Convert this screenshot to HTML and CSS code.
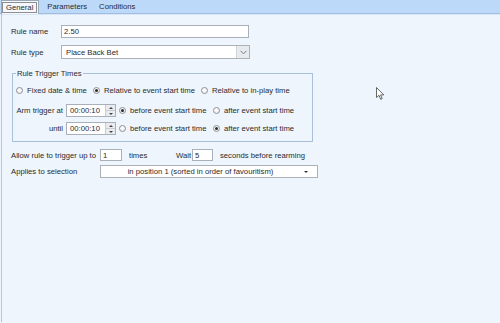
FILE: index.html
```html
<!DOCTYPE html>
<html>
<head>
<meta charset="utf-8">
<link rel="stylesheet" href="styles.css">
</head>
<body>
<div class="tabs">
  <div class="tab active"><span class="focus">General</span></div>
  <div class="tab">Parameters</div>
  <div class="tab">Conditions</div>
</div>
<div class="page">
  <div class="row r-name">
    <span class="lbl">Rule name</span>
    <div class="textbox wide">2.50</div>
  </div>
  <div class="row r-type">
    <span class="lbl">Rule type</span>
    <div class="combo wide">
      <span class="combo-text">Place Back Bet</span>
      <span class="combo-btn"><svg width="7" height="5" viewBox="0 0 7 5"><path d="M0.5 0.8 L3.5 3.8 L6.5 0.8" fill="none" stroke="#7a7a7a" stroke-width="1"/></svg></span>
    </div>
  </div>
  <div class="group">
    <span class="legend">Rule Trigger Times</span>
    <div class="grow g1">
      <span class="opt w77"><span class="radio"></span>Fixed date &amp; time</span>
      <span class="opt w108"><span class="radio on"></span>Relative to event start time</span>
      <span class="opt"><span class="radio"></span>Relative to in-play time</span>
    </div>
    <div class="grow g2">
      <span class="glbl">Arm trigger at</span>
      <div class="timebox">00:00:10<span class="spin"><span class="up"></span><span class="dn"></span></span></div>
      <span class="opt w94"><span class="radio on"></span>before event start time</span>
      <span class="opt"><span class="radio"></span>after event start time</span>
    </div>
    <div class="grow g3">
      <span class="glbl">until</span>
      <div class="timebox">00:00:10<span class="spin"><span class="up"></span><span class="dn"></span></span></div>
      <span class="opt w94"><span class="radio"></span>before event start time</span>
      <span class="opt"><span class="radio on"></span>after event start time</span>
    </div>
  </div>
  <div class="row r-allow">
    <span class="lbl2">Allow rule to trigger up to</span>
    <div class="textbox small">1</div>
    <span class="times">times</span>
    <span class="wait">Wait</span>
    <div class="textbox small">5</div>
    <span class="secs">seconds before rearming</span>
  </div>
  <div class="row r-apply">
    <span class="lbl2">Applies to selection</span>
    <div class="dropdown">
      <span class="dd-text">in position 1 (sorted in order of favouritism)</span>
      <span class="dd-arrow"></span>
    </div>
  </div>
</div>
<svg class="cursor" width="9" height="14" viewBox="0 0 9 14"><path d="M0.5 0.5 L0.5 10.5 L3 8.3 L4.7 12.3 L6.2 11.7 L4.6 7.9 L7.8 7.9 Z" fill="#fff" stroke="#555" stroke-width="0.9" stroke-linejoin="round"/></svg>
</body>
</html>
```

FILE: styles.css
```css
html, body {
  margin: 0;
  padding: 0;
}
body {
  width: 500px;
  height: 323px;
  overflow: hidden;
  background: #eef5fd;
  font-family: "Liberation Sans", Arial, sans-serif;
  font-size: 7.7px;
  color: #2b2b2b;
  position: relative;
}
.tabs {
  height: 13px;
  background: #bdd9fa;
  border-bottom: 1px solid #a3bde0;
  box-shadow: 0 1px 0 #d7e7f8;
  display: flex;
  align-items: stretch;
  padding-left: 1px;
}
.tab {
  display: flex;
  align-items: center;
  padding: 0 5px;
  margin-right: 1px;
}
.tab:nth-child(2) { margin-left: 2px; }
.tab:nth-child(3) { margin-left: 1px; }
.tab.active {
  background: #f4f8fd;
  border: 1px solid #9aa9ba;
  border-bottom: none;
  height: 14px;
  box-sizing: border-box;
  padding: 0 1px 0 0;
  margin-top: 0;
}
.focus {
  border: 1px solid #8e8e8e;
  padding: 0 3px;
  line-height: 9px;
}
.page {
  border-left: 1px solid #b8c6d6;
  margin-left: 1px;
  height: 308px;
  padding: 11px 0 0 9px;
  box-sizing: border-box;
}
.row {
  display: flex;
  align-items: center;
}
.lbl {
  width: 50px;
}
.textbox {
  background: #fff;
  border: 1px solid #a9b0b9;
  box-sizing: border-box;
  height: 13px;
  display: flex;
  align-items: center;
  padding-left: 2px;
}
.wide { width: 188px; }
.r-type { margin-top: 7px; }
.combo {
  background: #fff;
  border: 1px solid #acb1b8;
  box-sizing: border-box;
  height: 14px;
  width: 189px;
  display: flex;
  align-items: center;
  justify-content: space-between;
  padding-left: 4px;
}
.combo-btn {
  width: 12px;
  height: 12px;
  background: #e7eaee;
  border-left: 1px solid #cfd4da;
  display: flex;
  align-items: center;
  justify-content: center;
}
.group {
  position: relative;
  margin: 14px 0 0 1px;
  width: 301px;
  height: 69px;
  border: 1px solid #a8c0dc;
  box-sizing: border-box;
  padding: 10px 0 0 3px;
}
.legend {
  position: absolute;
  top: -5px;
  left: 3px;
  background: #eef5fd;
  padding: 0 1px;
  line-height: 9px;
}
.grow {
  display: flex;
  align-items: center;
  height: 13px;
}
.g2 { margin-top: 7px; }
.g3 { margin-top: 5px; }
.opt {
  display: flex;
  align-items: center;
  white-space: nowrap;
}
.w77 { width: 77px; }
.w108 { width: 108px; }
.w94 { width: 94px; }
.radio {
  width: 7px;
  height: 7px;
  border: 1px solid #8f9297;
  border-radius: 50%;
  box-sizing: border-box;
  background: radial-gradient(circle at 40% 40%, #ffffff 0%, #e8e8e8 100%);
  margin-right: 4px;
  position: relative;
  flex: none;
}
.radio.on::after {
  content: "";
  position: absolute;
  left: 1px;
  top: 1px;
  width: 3px;
  height: 3px;
  border-radius: 50%;
  background: #2a2a2a;
}
.glbl {
  width: 47px;
  text-align: right;
  margin-right: 3px;
}
.timebox {
  width: 50px;
  height: 13px;
  background: #fff;
  border: 1px solid #a9b0b9;
  box-sizing: border-box;
  display: flex;
  align-items: center;
  justify-content: space-between;
  padding-left: 3px;
  margin-right: 3px;
}
.spin {
  width: 9px;
  height: 11px;
  display: flex;
  flex-direction: column;
  border-left: 1px solid #c9cdd2;
  background: #e9ebee;
}
.spin span {
  flex: 1;
  display: flex;
  align-items: center;
  justify-content: center;
}
.spin .up {
  border-bottom: 1px solid #c9cdd2;
}
.spin .up::after {
  content: "";
  border-left: 2px solid transparent;
  border-right: 2px solid transparent;
  border-bottom: 2px solid #444;
}
.spin .dn::after {
  content: "";
  border-left: 2px solid transparent;
  border-right: 2px solid transparent;
  border-top: 2px solid #444;
}
.r-allow {
  margin-top: 7px;
  height: 12px;
}
.lbl2 {
  width: 89px;
}
.small {
  width: 22px;
  height: 12px;
}
.times {
  margin-left: 7px;
  width: 47px;
}
.wait {
  width: 16px;
}
.r-allow .small:nth-of-type(2) {
  width: 21px;
}
.secs {
  margin-left: 7px;
}
.r-apply {
  margin-top: 4px;
  height: 13px;
}
.dropdown {
  width: 218px;
  height: 13px;
  background: #fff;
  border: 1px solid #acb1b8;
  box-sizing: border-box;
  display: flex;
  align-items: center;
  position: relative;
}
.dd-text {
  flex: 1;
  text-align: center;
  padding-right: 4px;
}
.dd-arrow {
  width: 0;
  height: 0;
  border-left: 2px solid transparent;
  border-right: 2px solid transparent;
  border-top: 2px solid #333;
  margin-right: 9px;
}
.cursor {
  position: absolute;
  left: 376px;
  top: 87px;
}
```
